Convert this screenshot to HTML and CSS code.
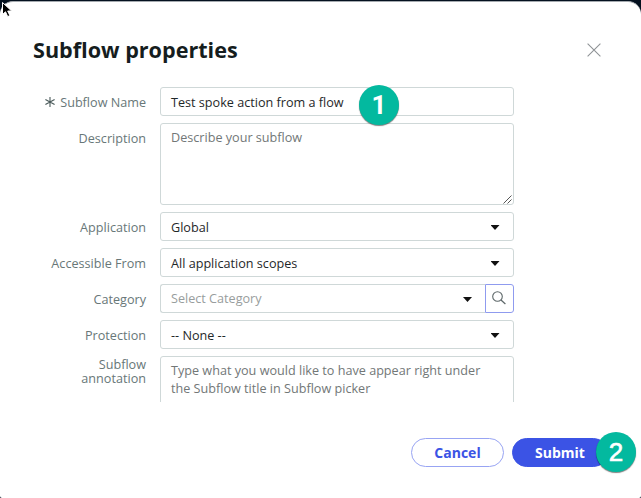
FILE: index.html
```html
<!DOCTYPE html>
<html lang="en">
<head>
<meta charset="utf-8">
<title>Subflow properties</title>
<link rel="stylesheet" href="styles.css">
</head>
<body>
<main class="dialog">
  <header class="head">
    <h1 class="title">Subflow properties</h1>
    <svg class="close" width="14" height="14" viewBox="0 0 14 14"><path d="M.6.6l12.8 12.8M13.4.6L.6 13.4" stroke="#8f9396" stroke-width="1.1" fill="none"/></svg>
  </header>
  <section class="form">
    <div class="row">
      <div class="label"><svg class="required" width="10" height="10" viewBox="0 0 10 10"><path d="M5 0v10M.4 2.4l9.2 5.2M9.6 2.4L.4 7.6" stroke="#4b5b5b" stroke-width="1.1"/></svg><span>Subflow Name</span></div>
      <div class="field"><span>Test spoke action from a flow</span><div class="badge badge-one">1</div></div>
    </div>
    <div class="row tall">
      <div class="label">Description</div>
      <div class="field area"><span>Describe your subflow</span>
        <svg class="grip" width="9" height="9" viewBox="0 0 9 9"><path d="M.5 8.5l8-8M4.5 8.5l4-4" stroke="#555" stroke-width="1"/></svg></div>
    </div>
    <div class="row">
      <div class="label">Application</div>
      <div class="field select"><span>Global</span><i class="caret"></i></div>
    </div>
    <div class="row">
      <div class="label">Accessible From</div>
      <div class="field select"><span>All application scopes</span><i class="caret"></i></div>
    </div>
    <div class="row">
      <div class="label">Category</div>
      <div class="group">
        <div class="field select combo"><span>Select Category</span><i class="caret"></i></div>
        <div class="search"><svg width="14" height="14" viewBox="0 0 14 14"><circle cx="5.5" cy="5.5" r="4.8" fill="none" stroke="#5d6769" stroke-width="1.1"/><path d="M9 9l4.4 4" stroke="#5d6769" stroke-width="1.2"/></svg></div>
      </div>
    </div>
    <div class="row">
      <div class="label">Protection</div>
      <div class="field select"><span>-- None --</span><i class="caret"></i></div>
    </div>
    <div class="row note">
      <div class="label two">Subflow<br>annotation</div>
      <div class="field area"><span>Type what you would like to have appear right under<br>the Subflow title in Subflow picker</span></div>
    </div>
  </section>
  <footer class="foot">
    <div class="button">Cancel</div>
    <div class="button primary">Submit<div class="badge badge-two">2</div></div>
  </footer>
</main>
<svg class="cursor" width="14" height="20" viewBox="0 0 14 20"><path d="M2.5 2.5v12l3-2.7 2.2 4.8 2.2-1-2.2-4.6h4z" fill="#000" stroke="#fff" stroke-width="1"/></svg>
</body>
</html>
```
FILE: styles.css
```css
* { box-sizing: border-box; }
body {
  margin: 0;
  width: 641px;
  height: 498px;
  overflow: hidden;
  background: #04111f;
  padding-top: 1px;
  font: 12.63px/18px "Open Sans", "Noto Sans", sans-serif;
  color: #1f2829;
}
.dialog {
  height: 497px;
  background: #fff;
  border-top: 1px solid #a5aaaf;
  border-radius: 13px 13px 2px 2px;
}
.head {
  display: flex;
  justify-content: space-between;
  padding: 33px 40.5px 0 33px;
  height: 80px;
}
.title {
  margin: 0;
  font-size: 21.6px;
  line-height: 30px;
  font-weight: 700;
  color: #151d1e;
  white-space: nowrap;
}
.close { margin-top: 8px; }
.form {
  height: 320px;
  padding-top: 5px;
  overflow: hidden;
  display: flex;
  flex-direction: column;
  gap: 7px;
}
.row {
  display: grid;
  grid-template-columns: 146px 353.5px;
  column-gap: 14px;
  height: 29px;
  flex: none;
}
.tall { height: 82px; }
.note { height: 82px; }
.label {
  display: flex;
  justify-content: flex-end;
  color: #687778;
  padding-top: 7px;
  text-align: right;
  white-space: nowrap;
}
.required { margin: 3px 5px 0 0; }
.two { padding-top: 2px; line-height: 14px; }
.field {
  position: relative;
  border: 1px solid #cfd8d8;
  border-radius: 3px;
  padding: 6px 10px 0;
  white-space: nowrap;
}
.area { color: #727777; padding-top: 5px; }
.select {
  display: flex;
  justify-content: space-between;
  padding-right: 13px;
}
.caret {
  width: 9px;
  height: 5px;
  margin-top: 6px;
  background: #111;
  clip-path: polygon(0 0, 100% 0, 50% 100%);
}
.group { display: flex; }
.combo {
  width: 325px;
  border-right: 0;
  border-radius: 3px 0 0 3px;
  color: #989d9d;
  padding-top: 5px;
}
.combo .caret { margin-top: 7px; }
.search {
  width: 28.5px;
  border: 1px solid #8f9bef;
  border-radius: 0 3px 3px 0;
  padding: 6px 0 0 6px;
  line-height: 0;
}
.grip { position: absolute; right: 1px; bottom: 0; }
.foot {
  display: flex;
  gap: 8px;
  padding: 36px 0 0 411px;
}
.button {
  position: relative;
  width: 93px;
  height: 29px;
  border: 1px solid #98a4f3;
  border-radius: 15px;
  font-weight: 700;
  font-size: 14px;
  line-height: 27px;
  text-align: center;
  color: #3b53e5;
}
.primary {
  width: 96px;
  background: #3b53e5;
  border-color: #3b53e5;
  color: #fff;
}
.badge {
  position: absolute;
  width: 40px;
  height: 40px;
  border-radius: 50%;
  background: #03b99f;
  box-shadow: 0 1px 1px rgba(0, 0, 0, .5);
  color: #fff;
  font: 700 26px/41px Roboto, "Liberation Sans", sans-serif;
  text-align: center;
}
.badge-one { left: 198px; top: -3px; z-index: 1; }
.badge-two {
  left: 83px;
  top: -7px;
  font-family: "Liberation Sans", Arial, sans-serif;
  font-weight: 400;
  -webkit-text-stroke: .6px #fff;
}
.cursor { position: absolute; left: 0; top: 0; }
```
